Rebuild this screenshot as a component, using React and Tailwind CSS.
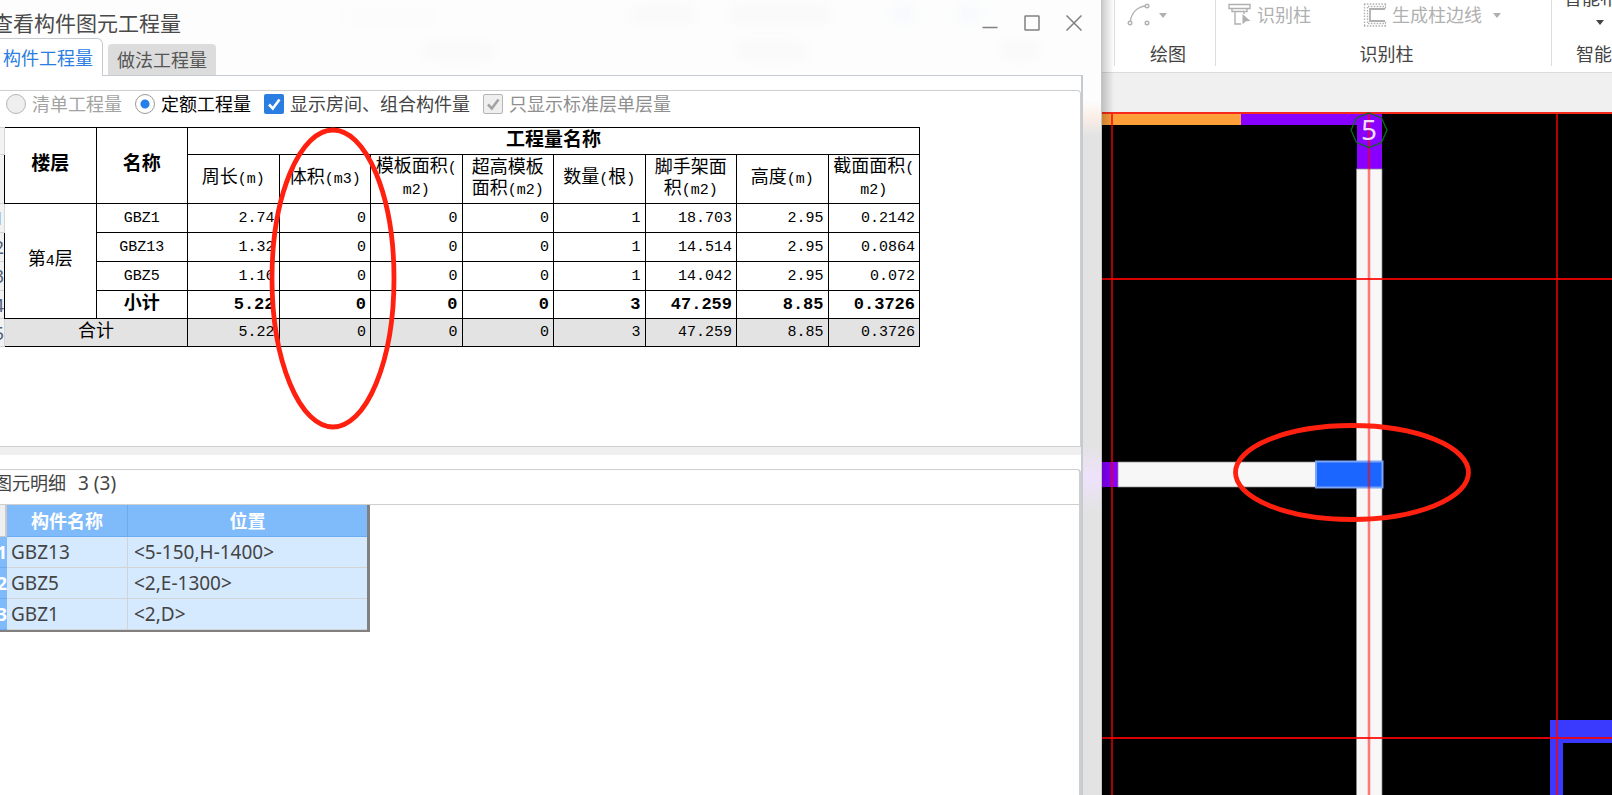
import { Fragment } from 'react';
import clsx from 'clsx';

const columns = [
  ['周长(m)'],
  ['体积(m3)'],
  ['模板面积(', 'm2)'],
  ['超高模板', '面积(m2)'],
  ['数量(根)'],
  ['脚手架面', '积(m2)'],
  ['高度(m)'],
  ['截面面积(', 'm2)'],
];

const quantities = [
  { name: 'GBZ1', values: ['2.74', '0', '0', '0', '1', '18.703', '2.95', '0.2142'] },
  { name: 'GBZ13', values: ['1.32', '0', '0', '0', '1', '14.514', '2.95', '0.0864'] },
  { name: 'GBZ5', values: ['1.16', '0', '0', '0', '1', '14.042', '2.95', '0.072'] },
  { name: '小计', subtotal: true, values: ['5.22', '0', '0', '0', '3', '47.259', '8.85', '0.3726'] },
];

const total = ['5.22', '0', '0', '0', '3', '47.259', '8.85', '0.3726'];

const elements = [
  { name: 'GBZ13', position: '<5-150,H-1400>' },
  { name: 'GBZ5', position: '<2,E-1300>' },
  { name: 'GBZ1', position: '<2,D>' },
];

// Latin runs use the half-width mono face, Chinese keeps the full-width size
const Mixed = ({ text }) =>
  text.split(/([\x20-\x7e]+)/).map((part, i) =>
    i % 2 ? (
      <span key={i} className="text-[15px]">
        {part}
      </span>
    ) : (
      <Fragment key={i}>{part}</Fragment>
    )
  );

const Gutter = ({ children }) => (
  <th className="border border-[#d4d4d4] bg-[#f2f2f2] p-0 text-right font-['Noto_Sans',sans-serif] text-lg leading-none font-normal text-[#4f6178]">
    {children}
  </th>
);

const QuantityTable = () => (
  <table className="-ml-[21px] h-[220px] w-[941px] table-fixed border-collapse bg-white font-['Liberation_Mono','Noto_Sans_CJK_SC',monospace] text-lg leading-[21px] text-black">
    <colgroup>
      <col className="w-[25px]" />
    </colgroup>
    <thead>
      <tr className="h-[27px]">
        <Gutter />
        <th rowSpan={2} className="border border-black p-0 text-[19px]">楼层</th>
        <th rowSpan={2} className="border border-black p-0 text-[19px]">名称</th>
        <th colSpan={8} className="border border-black p-0 text-[19px]">工程量名称</th>
      </tr>
      <tr className="h-[49px]">
        <Gutter />
        {columns.map((lines) => (
          <th key={lines.join('')} className="border border-black p-0 font-normal whitespace-nowrap">
            {lines.map((line) => (
              <span key={line} className="block">
                <Mixed text={line} />
              </span>
            ))}
          </th>
        ))}
      </tr>
    </thead>
    <tbody>
      {quantities.map((row, i) => (
        <tr key={row.name} className={clsx(row.subtotal && 'font-bold')}>
          <Gutter>{i + 1}</Gutter>
          {i === 0 && (
            <td rowSpan={4} className="border border-black p-0 text-center font-normal">
              <Mixed text="第4层" />
            </td>
          )}
          <td className="border border-black p-0 text-center">
            <Mixed text={row.name} />
          </td>
          {row.values.map((value, j) => (
            <td key={j} className={clsx('border border-black p-0 pr-1 text-right', row.subtotal ? 'text-[17px]' : 'text-[15px]')}>
              {value}
            </td>
          ))}
        </tr>
      ))}
      <tr className="bg-[#e3e3e3]">
        <Gutter>5</Gutter>
        <td colSpan={2} className="border border-black p-0 text-center">合计</td>
        {total.map((value, j) => (
          <td key={j} className="border border-black p-0 pr-1 text-right text-[15px]">
            {value}
          </td>
        ))}
      </tr>
    </tbody>
  </table>
);

const ElementTable = () => (
  <table className="-ml-5 h-[127px] w-[390px] table-fixed border-separate border-spacing-0 border-r-3 border-b-2 border-[#808080] text-[19px] leading-6 text-[#444]">
    <colgroup>
      <col className="w-[27px]" />
      <col className="w-[121px]" />
      <col />
    </colgroup>
    <thead>
      <tr className="h-8 text-lg text-white">
        <th className="border-r-2 border-b border-[#c8c8c8] bg-[#efefef] p-0" />
        <th className="border-r border-b border-[#6dabf0] bg-[#7fbbfb] p-0">构件名称</th>
        <th className="border-b border-[#6dabf0] bg-[#7fbbfb] p-0">位置</th>
      </tr>
    </thead>
    <tbody>
      {elements.map((el, i) => (
        <tr key={el.name}>
          <th className="border-b border-[#6dabf0] bg-[#7fbbfb] p-0 text-right text-lg text-white">{i + 1}</th>
          <td className="border-r border-b border-[#d3d3d3] bg-[#d6eaff] p-0 pl-1">{el.name}</td>
          <td className="border-b border-[#d3d3d3] bg-[#d6eaff] p-0 pl-1.5">{el.position}</td>
        </tr>
      ))}
    </tbody>
  </table>
);

const Tick = ({ className }) => (
  <svg viewBox="0 0 20 20" className={clsx('pointer-events-none col-start-1 row-start-1 size-5 fill-none', className)}>
    <path d="M5 10.5 8.8 14.5 15.5 5.5" strokeWidth="2.6" />
  </svg>
);

const Options = () => (
  <form className="flex h-[26px] items-center pl-1.5 text-lg leading-6 whitespace-nowrap">
    <label className="mr-[13px] flex items-center gap-[6px] text-[#a3a3a3]">
      <input type="radio" name="kind" disabled className="size-5 appearance-none rounded-full border border-[#b5b5b5] bg-[#efefef]" />
      清单工程量
    </label>
    <label className="mr-[13px] flex items-center gap-[6px] text-black">
      <input
        type="radio"
        name="kind"
        defaultChecked
        className="size-5 appearance-none rounded-full border border-[#999] bg-[radial-gradient(circle,#2680eb_4px,#fff_5px)]"
      />
      定额工程量
    </label>
    <label className="mr-[13px] flex items-center gap-[6px] text-[#444]">
      <span className="grid">
        <input type="checkbox" defaultChecked className="col-start-1 row-start-1 size-5 appearance-none rounded-xs bg-[#2a7de1]" />
        <Tick className="stroke-white" />
      </span>
      显示房间、组合构件量
    </label>
    <label className="flex items-center gap-[6px] text-[#8f8f8f]">
      <span className="grid">
        <input type="checkbox" defaultChecked disabled className="col-start-1 row-start-1 size-5 appearance-none rounded-xs border border-[#b5b5b5] bg-[#efefef]" />
        <Tick className="stroke-[#a3a3a3]" />
      </span>
      只显示标准层单层量
    </label>
  </form>
);

const TitleBar = () => (
  <header className="-mr-[18px] flex h-[38px] items-center justify-between">
    <h1 className="-ml-2 pt-2 text-[21px] leading-7 whitespace-nowrap text-[#4a4a4a]">查看构件图元工程量</h1>
    <div className="flex gap-[26px] pt-2 pr-[19px] text-[#808080]">
      <button type="button" aria-label="最小化">
        <svg viewBox="0 0 16 16" className="size-4 fill-none stroke-current" strokeWidth="1.5">
          <path d="M.5 12.5h15" />
        </svg>
      </button>
      <button type="button" aria-label="最大化">
        <svg viewBox="0 0 16 16" className="size-4 fill-none stroke-current" strokeWidth="1.5">
          <rect x="1" y="1" width="14" height="14" rx=".6" />
        </svg>
      </button>
      <button type="button" aria-label="关闭">
        <svg viewBox="0 0 16 16" className="size-4 fill-none stroke-current" strokeWidth="1.5">
          <path d="m.5.5 15 15m0-15-15 15" />
        </svg>
      </button>
    </div>
  </header>
);

// Ribbon shapes showing faintly through the translucent title area
const Backdrop = () => (
  <svg className="pointer-events-none absolute inset-0 h-[75px] w-full fill-[#f8f8f8] blur-[6px]">
    <rect x="345" y="8" width="85" height="14" fill="#fbfbfb" />
    <rect x="425" y="44" width="66" height="14" />
    <rect x="632" y="8" width="60" height="14" />
    <rect x="732" y="8" width="96" height="14" />
    <rect x="738" y="44" width="66" height="14" />
    <rect x="894" y="6" width="18" height="16" fill="#f5f9fd" />
    <rect x="960" y="6" width="18" height="16" fill="#f5f9fd" />
    <rect x="1002" y="44" width="36" height="14" />
  </svg>
);

const QuantityWindow = () => (
  <section className="relative flex min-w-0 flex-1 flex-col overflow-hidden border-r border-[#c4c4c4] bg-linear-to-b from-[#fdfdfd] from-[100px] via-[#faeee6] via-[118px] to-[#e3e3e3] to-[136px] pr-[18px]">
    <div className="absolute top-[446px] right-0 h-[64px] w-[18px] bg-linear-to-b from-transparent via-[#efe2fc] to-transparent" />
    <div className="absolute inset-x-0 top-0 h-[75px] bg-[#fdfdfd]" />
    <Backdrop />
    <div className="relative">
      <TitleBar />
      <nav className="flex h-[37px] items-end text-lg leading-6">
        <button type="button" className="z-10 -mb-px h-[38px] rounded-tr-md border-t border-r border-[#c6cbd2] bg-white pr-[9px] pl-[3px] text-[#2a7de1]">
          构件工程量
        </button>
        <button type="button" className="ml-[5px] h-[31px] rounded-t bg-[#dcdcdc] px-[9px] text-[#555]">
          做法工程量
        </button>
      </nav>
    </div>

    <div className="relative flex flex-1 flex-col border-t border-r-2 border-[#c6cbd2] bg-white pt-[14px]">
      <div className="h-[357px] rounded-tr border-t border-r border-b border-[#cfcfcf]">
        <Options />
        <div className="pt-[10px]">
          <QuantityTable />
        </div>
      </div>
      <div className="h-[8px] shrink-0 bg-[#efefef]" />
      <div className="mt-[14px] flex flex-1 flex-col rounded-tr border-t border-r-2 border-[#cfcfcf]">
        <h2 className="-ml-1.5 flex h-[35px] items-center gap-3 border-b border-[#cfcfcf] pb-2 text-lg leading-6 text-[#444]">
          <span>图元明细</span>
          <span className="text-[19px]">3 (3)</span>
        </h2>
        <ElementTable />
      </div>
      <svg className="pointer-events-none absolute top-[49px] left-[268px] h-[306px] w-[130px] fill-none stroke-[#ff2010]">
        <ellipse cx="65" cy="153.5" rx="61" ry="148.5" strokeWidth="4.8" />
      </svg>
    </div>
  </section>
);

const Caret = () => (
  <svg viewBox="0 0 8 5" className="h-[5px] w-2 fill-current">
    <path d="M0 0h8L4 5z" />
  </svg>
);

const Ribbon = () => (
  <header className="flex h-[73px] overflow-hidden border-b border-[#dcdcdc] bg-white pb-[6px] pl-3 text-lg leading-6 whitespace-nowrap text-[#444]">
    <div className="flex w-[101px] shrink-0 flex-col justify-between border-l border-[#dcdcdc]">
      <button type="button" className="flex h-[30px] items-center gap-2 pl-3 text-[#b0b0b0]">
        <svg viewBox="0 0 24 24" className="size-6 fill-none stroke-current" strokeWidth="1.4">
          <path d="M3.2 18.5C4.5 10 10 4 18.5 3" />
          <circle cx="3" cy="20" r="1.8" />
          <circle cx="20" cy="3" r="1.8" />
          <circle cx="20" cy="20" r="1.8" />
        </svg>
        <Caret />
      </button>
      <span className="pl-1.5 text-center">绘图</span>
    </div>
    <div className="flex w-[336px] shrink-0 flex-col items-center justify-between border-l border-[#dcdcdc]">
      <div className="flex h-[30px] w-full items-center justify-between pr-[50px] pl-3 text-[#b0b0b0]">
        <button type="button" className="flex items-center gap-[5px]">
          <svg viewBox="0 0 24 24" className="size-6 fill-none stroke-current" strokeWidth="1.4">
            <path d="M1 1.500h21v4H1zM4 5.500v3h15v-3M7 8.500V21h6M16 8.500V11" />
            <path d="m14.500 11 8 7-4.500.3-3.500 3z" fill="currentColor" stroke="none" />
          </svg>
          识别柱
        </button>
        <button type="button" className="flex items-center gap-[5px]">
          <svg viewBox="0 0 24 26" className="h-[26px] w-6 fill-none stroke-current" strokeWidth="1.3">
            <path d="M1 2h22M1 24h22M1.5 2v22M22.5 2v5M22.5 20v4" strokeDasharray="1.5 1.4" />
            <path d="M22 7H7v12h15" strokeWidth="1.8" />
            <path d="M5 4.500h18M4.500 5v17M5 21.500h18" strokeDasharray="1.5 1.4" />
          </svg>
          生成柱边线
          <span className="pl-[6px]">
            <Caret />
          </span>
        </button>
      </div>
      <span className="pl-1.5">识别柱</span>
    </div>
    <div className="flex shrink-0 flex-col justify-between border-l border-[#dcdcdc]">
      <button type="button" className="-mt-3.5 flex flex-col items-center gap-[10px] self-start pl-3">
        智能布置
        <Caret />
      </button>
      <span className="pl-6">智能布置</span>
    </div>
  </header>
);

const Drawing = () => (
  <svg className="min-h-0 w-full flex-1 bg-black">
    <rect x="0" y="2" width="139" height="11" fill="#ff9f3a" />
    <path d="M139 2h141v55h-25V13H139z" fill="#8800ff" />

    <rect x="254.500" y="57" width="25.500" height="100%" fill="#f7f7f7" stroke="#8a8a8a" strokeWidth=".7" />
    <rect x="0" y="350" width="16" height="25" fill="#8800ff" />
    <rect x="16" y="350" width="199" height="25" fill="#f7f7f7" stroke="#8a8a8a" strokeWidth=".7" />
    <rect x="214" y="349.500" width="66.500" height="26" fill="#1a66ff" stroke="#7da4f5" strokeWidth="2" />

    <path d="M448 608h62v23h-49v60h-13z" fill="#3a3aff" />

    <g stroke="#ff0000" strokeWidth="2">
      <path d="M0 1h600" stroke="#f52a1c" />
      <path d="M0 167h600M0 626h600" strokeOpacity=".85" />
      <path d="M10 2v900M455 2v900" strokeOpacity=".7" />
      <path d="M267 2v900" strokeOpacity=".5" strokeWidth="2.6" />
    </g>

    <path d="m267 1 12.500 5 5.500 12-5.500 12.500-12.500 5-12.500-5-5.500-12.500 5.500-12z" fill="none" stroke="#0a6b1a" strokeWidth="1.300" />
    <text x="267" y="28" textAnchor="middle" fontSize="28" fill="#f0dcff">
      5
    </text>
    <ellipse cx="250" cy="360.500" rx="116.500" ry="47" fill="none" stroke="#ff2010" strokeWidth="4.800" />
  </svg>
);

const App = () => (
  <main className="flex h-screen overflow-hidden font-['Noto_Sans','Noto_Sans_CJK_SC',sans-serif]">
    <QuantityWindow />
    <section className="relative flex w-[510px] shrink-0 flex-col bg-[#f0f0f0]">
      <Ribbon />
      <div className="h-[39px] shrink-0" />
      <Drawing />
      <div className="pointer-events-none absolute inset-y-0 left-0 w-3 bg-linear-to-r from-black/20 to-transparent" />
    </section>
  </main>
);

export default App;
